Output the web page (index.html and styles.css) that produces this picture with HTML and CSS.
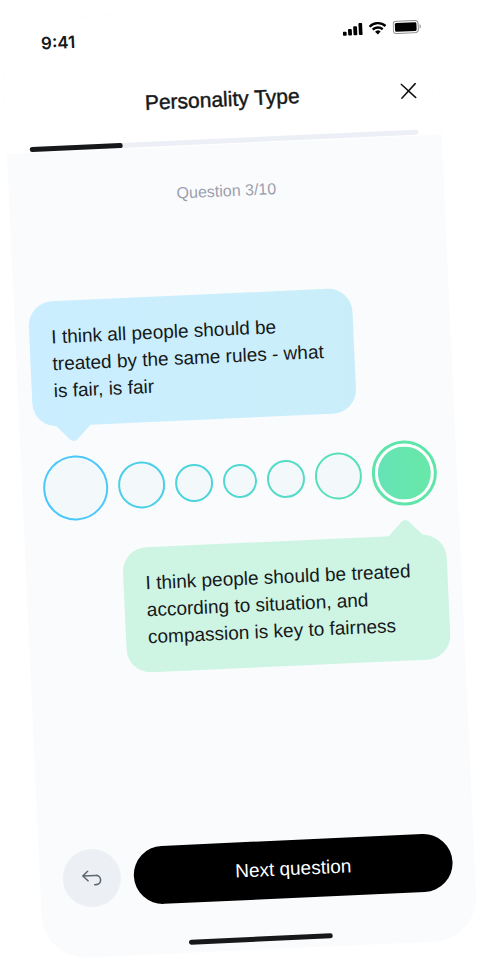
FILE: index.html
```html
<!DOCTYPE html>
<html lang="en">
<head>
<meta charset="utf-8">
<meta name="viewport" content="width=device-width, initial-scale=1">
<title>Personality Type</title>
<link rel="stylesheet" href="styles.css">
</head>
<body>
<div class="phone">
  <header class="header">
    <div class="status">
      <span class="time">9:41</span>
      <div class="status-icons">
        <svg width="20" height="14" viewBox="0 0 20 14" aria-hidden="true"><rect x="0" y="9" width="3.8" height="4" rx="1"/><rect x="5.3" y="6.5" width="3.8" height="6.5" rx="1"/><rect x="10.6" y="4" width="3.8" height="9" rx="1"/><rect x="16" y="1" width="3.8" height="12" rx="1"/></svg>
        <svg width="18" height="14" viewBox="0 0 18 14" aria-hidden="true"><g fill="none" stroke="#000" stroke-width="2.4"><path d="M1 5.1a11.4 11.4 0 0 1 16 0"/><path d="M4 8.2a7.2 7.2 0 0 1 10 0"/></g><path d="M9 13.2 6.2 10.4a4 4 0 0 1 5.6 0z"/></svg>
        <svg width="29" height="14" viewBox="0 0 29 14" aria-hidden="true"><rect x=".6" y=".9" width="25" height="12.2" rx="3.2" fill="#fff" stroke="#8d8d8d"/><rect x="2.3" y="2.6" width="21.6" height="8.8" rx="1.4"/><path d="M27 4.8c1.8.6 1.8 3.8 0 4.4z" fill="#999"/></svg>
      </div>
    </div>
    <div class="title-bar">
      <h1 class="title">Personality Type</h1>
      <button class="close" type="button" aria-label="Close">
        <svg width="16" height="16" viewBox="0 0 16 16" fill="none" stroke="#111" stroke-width="1.5" stroke-linecap="round"><path d="M1 1l14 14M15 1 1 15"/></svg>
      </button>
    </div>
    <div class="progress"><div class="progress-value"></div></div>
  </header>
  <main class="main">
    <p class="step">Question 3/10</p>
    <p class="bubble bubble-blue">I think all people should be<br>treated by the same rules - what<br>is fair, is fair
      <svg class="tip" width="36" height="17" viewBox="0 0 36 17" aria-hidden="true"><path d="M0 0H36L22 14.5Q18 18.5 14 14.5Z"/></svg>
    </p>
    <div class="scale" role="radiogroup" aria-label="Your position">
      <input class="dot large c1" type="radio" name="answer" aria-label="Strongly first">
      <input class="dot medium c2" type="radio" name="answer" aria-label="Mostly first">
      <input class="dot small c3" type="radio" name="answer" aria-label="Slightly first">
      <input class="dot tiny c4" type="radio" name="answer" aria-label="Neutral">
      <input class="dot small c5" type="radio" name="answer" aria-label="Slightly second">
      <input class="dot medium c6" type="radio" name="answer" aria-label="Mostly second">
      <input class="dot large c7" type="radio" name="answer" aria-label="Strongly second" checked>
    </div>
    <p class="bubble bubble-green">I think people should be treated<br>according to situation, and<br>compassion is key to fairness
      <svg class="tip" width="36" height="17" viewBox="0 0 36 17" aria-hidden="true"><path d="M0 17H36L22 2.5Q18 -1.5 14 2.5Z"/></svg>
    </p>
  </main>
  <footer class="footer">
    <div class="actions">
      <button class="back" type="button" aria-label="Back">
        <svg width="20" height="16" viewBox="0 0 20 16" fill="none" stroke="#5d686c" stroke-width="1.6" stroke-linecap="round" stroke-linejoin="round"><path d="M6 1 1 5.5 6 10.5M1 5.5H14a4.6 4.6 0 0 1 0 9.2H12.5"/></svg>
      </button>
      <button class="next" type="button">Next question</button>
    </div>
    <div class="home"></div>
  </footer>
</div>
</body>
</html>
```
FILE: styles.css
```css
* { box-sizing: border-box; }
html { background: #fff; }
body {
  margin: 0;
  overflow: hidden;
  font-family: "Liberation Sans", Arial, sans-serif;
  color: #161819;
}
h1, p { margin: 0; }
button { border: 0; padding: 0; font: inherit; cursor: pointer; }
svg { display: block; }

.phone {
  display: flex;
  flex-direction: column;
  margin: 10px 22px;
  min-height: calc(100vh - 20px);
  border-radius: 44px;
  overflow: hidden;
  background: #fafbfd;
  transform: rotate(-2.6deg);
}

.header { background: #fff; padding-bottom: 1px; }
.status {
  display: flex;
  align-items: center;
  justify-content: space-between;
  height: 50px;
  padding: 0 15px 0 39px;
}
.time { font-family: Inter, sans-serif; font-size: 17px; font-weight: 600; line-height: 20px; }
.status-icons { display: flex; align-items: center; gap: 6px; }

.title-bar {
  display: grid;
  grid-template-columns: 32px 1fr 32px;
  align-items: center;
  height: 78px;
  padding: 0 15px;
}
.title {
  grid-column: 2;
  text-align: center;
  font-size: 21px;
  font-weight: 400;
  line-height: 24px;
  -webkit-text-stroke: thin #161819;
}
.close {
  display: grid;
  place-items: center;
  width: 32px;
  height: 32px;
  background: none;
}
.progress {
  height: 5px;
  margin: 0 23px;
  border-radius: 3px;
  background: #eceff5;
}
.progress-value {
  width: 24%;
  height: 5px;
  border-radius: 3px;
  background: #161819;
}

.main { display: flex; flex-direction: column; padding: 37px 14px 0; }
.step {
  margin-bottom: 92px;
  text-align: center;
  font-size: 16px;
  line-height: 20px;
  color: #9c9fae;
}
.bubble {
  position: relative;
  width: 324px;
  max-width: 100%;
  padding: 22px;
  border-radius: 24px;
  font-size: 19px;
  line-height: 27px;
}
.bubble-blue { background: linear-gradient(90deg, #caeeff, #caeef9); }
.bubble-green { align-self: flex-end; background: #cef4e4; }
.tip { position: absolute; }
.bubble-blue .tip { left: 22px; top: 100%; margin-top: -1px; fill: #caeefe; }
.bubble-green .tip { right: 22px; bottom: 100%; margin-bottom: -1px; fill: #cef4e4; }

.scale {
  display: flex;
  align-items: center;
  justify-content: center;
  gap: 10px;
  margin: 30px 0;
}
.dot {
  appearance: none;
  flex: none;
  margin: 0;
  border: 2px solid;
  border-radius: 50%;
  background: #f3f9fb;
}
.large { width: 65px; height: 65px; }
.medium { width: 47px; height: 47px; }
.small { width: 38px; height: 38px; }
.tiny { width: 34px; height: 34px; }
.c1 { border-color: #4ac8fb; }
.c2 { border-color: #4acfe8; }
.c3 { border-color: #4bd4dc; }
.c4 { border-color: #50d8d2; }
.c5 { border-color: #54dbc8; }
.c6 { border-color: #57dfb9; }
.c7 { border-color: #5fe5aa; }
.dot:checked {
  border-width: 3px;
  padding: 3px;
  background: linear-gradient(90deg, #65e3b6, #68e8a8) content-box, #fff;
}

.footer {
  margin-top: auto;
  padding: 0 22px 8px 23px;
}
.actions { display: flex; gap: 13px; }
.back {
  display: grid;
  place-items: center;
  flex: none;
  width: 58px;
  height: 58px;
  border-radius: 50%;
  background: #eceff4;
}
.next {
  flex: 1;
  height: 58px;
  border-radius: 29px;
  background: #000;
  color: #fff;
  font-size: 19px;
}
.home {
  width: 144px;
  height: 5px;
  margin: 37px auto 0;
  border-radius: 3px;
  background: #161819;
}
```
